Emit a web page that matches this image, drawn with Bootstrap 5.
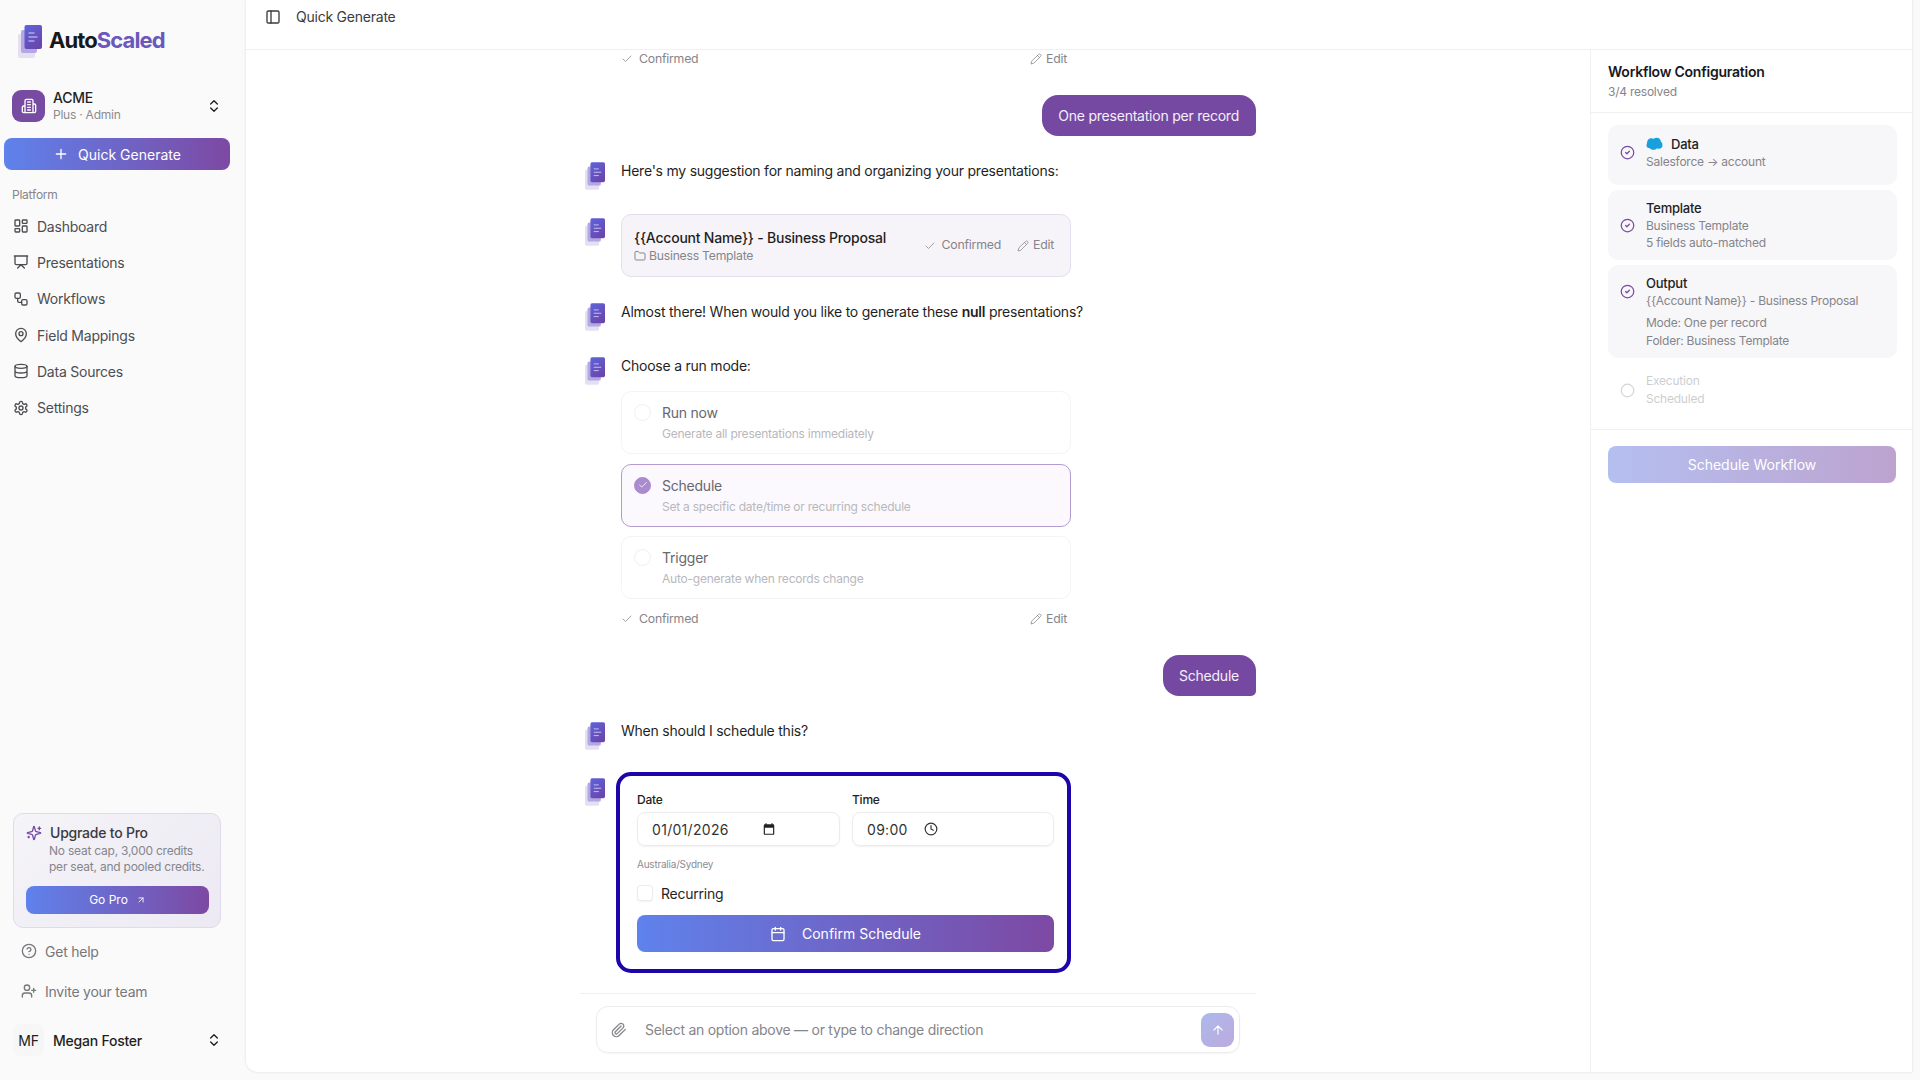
<!DOCTYPE html>
<html lang="en">
<head>
  <meta charset="UTF-8" />
  <title>AutoScaled - Quick Generate</title>
  <link href="https://cdn.jsdelivr.net/npm/bootstrap@5.3.0/dist/css/bootstrap.min.css" rel="stylesheet">
  <style>
    html, body { height: 100%; }
    body { font-family: Inter, "Liberation Sans", sans-serif; background: #fafafa; color: #1f1f23; font-size: 14px; letter-spacing: -0.23px; overflow: hidden; }
    .ico { width: 16px; height: 16px; fill: none; stroke: currentColor; stroke-width: 2; stroke-linecap: round; stroke-linejoin: round; flex: none; }
    .svg-defs { position: absolute; width: 0; height: 0; }

    .side { width: 246px; height: 1080px; flex: none; }
    .brand { height: 74px; padding: 25px 0 0 18px; font-size: 22px; font-weight: 700; letter-spacing: -0.9px; color: #18181b; gap: 7px; }
    .brand b { color: #6a58bd; font-weight: 700; }
    .org { margin: 16px 0 16px; padding: 0 24px 0 12px; height: 32px; }
    .org-ico { width: 33px; height: 32px; border-radius: 9px; background: #784ba3; color: #fff; }
    .org-name { font-size: 14px; font-weight: 500; line-height: 17px; }
    .org-sub { font-size: 12px; line-height: 17px; color: #8b8b90; }
    .grad-btn { background: linear-gradient(90deg, #5f82ec, #7d49a3); color: #fff; border: 0; border-radius: 8px; }
    .grad-btn:hover { color: #fff; }
    .quick { width: 226px; height: 32px; margin-left: 4px; font-size: 14px; gap: 9px; }
    .plat { font-size: 12px; color: #85858a; margin: 17px 0 0 12px; line-height: 16px; }
    .side-nav { margin-top: 5px; }
    .side-nav .nav-link { height: 36.3px; padding: 0 0 0 13px; gap: 8px; color: #4d4d52; font-size: 14px; }
    .promo { margin: 0 25px 0 13px; height: 115px; padding: 9px 12px; border-radius: 10px; border: 1px solid #e0dbec; background: linear-gradient(135deg, #f5f4f8, #ece9f3); }
    .promo-title { font-size: 14px; font-weight: 500; line-height: 20px; color: #3a3a40; }
    .promo-text { font-size: 12px; line-height: 16px; color: #85858c; padding-left: 23px; white-space: nowrap; }
    .go { height: 28px; font-size: 12px; margin-top: 11px; gap: 8px; width: 183px; }
    .foot-link { height: 40px; padding-left: 21px; gap: 8px; color: #77777c; font-size: 14px; }
    .who { height: 32px; margin: 13px 0 24px; padding: 0 24px 0 13px; }
    .who-av { width: 31px; height: 32px; border-radius: 8px; background: #f6f6f6; font-size: 14px; color: #222; }
    .who-name { margin-left: 9px; }

    .shell { width: 1666px; height: 1072px; background: #fff; border-radius: 0 0 0 12px; box-shadow: 0 0 3px rgba(0, 0, 0, .12); }
    .topbar { height: 50px; border-bottom: 1px solid #f0f0f0; padding: 8px 0 0 19px; gap: 15px; color: #3b3b40; font-size: 14px; line-height: 18px; }
    .chat { width: 1344px; }
    .thread { width: 676px; margin: 0 auto; flex: 1; overflow: hidden; padding-left: 5px; }
    .conf-row { width: 450px; height: 18px; margin-left: 36px; font-size: 12.3px; color: #85858a; padding: 0 4px 0 0; }
    .conf-row .ico, .pick-head .ico { width: 12px; height: 12px; stroke-width: 1.5; }
    .conf-gap { gap: 6px; }
    .bubble { background: #7549a2; color: #f4eff9; padding: 0 17px 0 16px; height: 41px; border-radius: 16px 16px 5px 16px; align-self: flex-end; font-size: 14px; }
    .msg { gap: 16px; }
    .msg-logo { width: 20px; height: 28px; flex: none; }
    .logo-text { margin-top: 2px; }
    .logo-card { margin-top: 4px; }
    .logo-form { margin-top: 6px; }
    .msg-text { line-height: 22px; }
    .name-card { width: 450px; height: 63px; border: 1px solid #e4dfee; border-radius: 10px; background: #f6f4f9; padding: 0 16px 0 12px; }
    .name-card b { font-weight: 500; font-size: 14px; line-height: 20px; }
    .name-sub { font-size: 12.2px; color: #85858a; line-height: 16px; gap: 3px; }
    .pick { width: 450px; height: 63px; margin-left: 36px; border: 1px solid #f4f4f5; border-radius: 10px; padding: 11px 12px 0 40px; position: relative; }
    .pick.on { border-color: #b39ad0; background: #fbf9fd; }
    .pick-gap { margin-top: 9.5px; }
    .pick-title { font-size: 14px; font-weight: 400; line-height: 20px; color: #68686d; }
    .pick-sub { font-size: 12px; line-height: 18px; color: #b8b8bc; margin-top: 2px; }
    .radio-dot { position: absolute; left: 12px; top: 12px; width: 17px; height: 17px; border-radius: 50%; border: 1px solid #f0f0f1; color: #fff; }
    .on .radio-dot { background: #a98bce; border-color: #a98bce; }
    .sched-box { width: 455px; height: 201px; margin-left: -5px; border: 4px solid #1c05ab; border-radius: 15px; padding: 16px 12px 0 17px; }
    .fld-label { font-size: 12px; font-weight: 500; line-height: 16px; margin-bottom: 4px; color: #222; }
    .fld-date { flex: 0 0 215px; }
    .fake-input { height: 34px; border-radius: 8px; border: 1px solid #ececee; box-shadow: 0 1px 2px rgba(0, 0, 0, .06); padding: 0 14px; font-size: 14px; letter-spacing: .3px; gap: 16px; color: #333; }
    .cal-ico { margin-left: 17px; }
    .tz { font-size: 10px; color: #8d8d92; margin-top: 12px; line-height: 12px; }
    .recur { margin-top: 10px; height: 26px; gap: 8px; font-size: 14px; }
    .recur .form-check-input { width: 16px; height: 16px; margin: 0; border-color: #ececee; box-shadow: 0 1px 2px rgba(0, 0, 0, .06); }
    .confirm { width: 417px; height: 37px; margin-top: 9px; font-size: 14px; gap: 16px; }
    .composer-wrap { width: 676px; margin: 0 auto; height: 79px; border-top: 1px solid #f0f0f0; padding: 12px 16px 0; }
    .composer { height: 47px; border: 1px solid #ececee; border-radius: 12px; padding: 0 5px 0 14px; gap: 18px; color: #85858a; font-size: 14px; letter-spacing: -0.26px; box-shadow: 0 1px 2px rgba(0, 0, 0, .04); }
    .send { width: 33px; height: 34px; border-radius: 9px; background: linear-gradient(135deg, #adb9ec, #bda9dd); color: #fff; }

    .cfg { width: 322px; border-left: 1px solid #f0f0f0; height: 1022px; }
    .cfg-head { height: 63px; padding: 12px 16px 0 17px; border-bottom: 1px solid #efeff0; }
    .cfg-title { font-size: 14px; font-weight: 600; line-height: 20px; color: #18181b; }
    .cfg-sub { font-size: 12px; color: #85858a; line-height: 18px; margin-top: 1px; }
    .cfg-list { padding: 12px 15px 0 17px; height: 317px; border-bottom: 1px solid #efeff0; gap: 5px; }
    .step { border-radius: 10px; background: #f7f6f9; padding: 0 12px; gap: 11px; }
    .step-check { width: 15px; height: 15px; color: #784ba3; stroke-width: 2; }
    .step-name { font-size: 13px; font-weight: 500; line-height: 18px; color: #222; }
    .step-line { font-size: 12px; line-height: 18px; color: #85858a; white-space: nowrap; }
    .step.off { background: none; opacity: .4; }
    .sched-btn { width: 288px; height: 37px; margin: 16px 0 0 17px; background: linear-gradient(90deg, #b4bff0, #bda3cf); font-size: 14px; }
  </style>
</head>
<body class="d-flex">
  <svg class="svg-defs">
    <defs>
      <linearGradient id="logo-fill" x1="0" y1="0" x2="0.6" y2="1"><stop offset="0" stop-color="#5c66dc"/><stop offset="1" stop-color="#6b45ae"/></linearGradient>
    </defs>
    <symbol id="i-logo" viewBox="0 0 24 33">
      <rect x="0" y="9" width="17" height="24" rx="2" fill="#e4dff3"/>
      <rect x="3" y="5" width="16" height="23" rx="2" fill="#b4a8e2"/>
      <rect x="6.5" y="0" width="17.5" height="24" rx="2" fill="url(#logo-fill)"/>
      <path d="M10.5 8h6M10.5 12h9M10.5 16h6" stroke="#d8d4f5" stroke-width="1" fill="none"/>
    </symbol>
    <symbol id="i-updown" viewBox="0 0 24 24"><path d="m7 15 5 5 5-5M7 9l5-5 5 5"/></symbol>
    <symbol id="i-check" viewBox="0 0 24 24"><path d="M20 6 9 17l-5-5"/></symbol>
    <symbol id="i-pencil" viewBox="0 0 24 24"><path d="M17 3a2.85 2.83 0 1 1 4 4L7.5 20.5 2 22l1.5-5.5ZM15 5l4 4"/></symbol>
    <symbol id="i-cal" viewBox="0 0 24 24"><path d="M8 2v4M16 2v4M3 10h18"/><rect x="3" y="4" width="18" height="18" rx="2"/></symbol>
    <symbol id="i-cc" viewBox="0 0 24 24"><circle cx="12" cy="12" r="10"/><path d="m9 12 2 2 4-4"/></symbol>
  </svg>

  <aside class="side d-flex flex-column">
    <div class="brand d-flex align-items-start">
      <svg width="24" height="33"><use href="#i-logo"/></svg>
      <span class="lh-1 mt-1">Auto<b>Scaled</b></span>
    </div>
    <div class="org d-flex align-items-center">
      <div class="org-ico d-flex align-items-center justify-content-center">
        <svg class="ico" viewBox="0 0 24 24" stroke-width="1.6"><path d="M6 22V4a2 2 0 0 1 2-2h8a2 2 0 0 1 2 2v18ZM6 12H4a2 2 0 0 0-2 2v6a2 2 0 0 0 2 2h2M18 9h2a2 2 0 0 1 2 2v9a2 2 0 0 1-2 2h-2M10 6h4M10 10h4M10 14h4M10 18h4"/></svg>
      </div>
      <div class="ms-2 flex-grow-1">
        <div class="org-name">ACME</div>
        <div class="org-sub">Plus · Admin</div>
      </div>
      <svg class="ico"><use href="#i-updown"/></svg>
    </div>
    <button class="btn grad-btn quick d-flex align-items-center justify-content-center p-0">
      <svg class="ico" viewBox="0 0 24 24"><path d="M5 12h14M12 5v14"/></svg>Quick Generate
    </button>
    <div class="plat">Platform</div>
    <nav class="nav flex-column side-nav">
      <a class="nav-link d-flex align-items-center" href="#"><svg class="ico" viewBox="0 0 24 24"><rect x="3" y="3" width="7" height="9" rx="1"/><rect x="14" y="3" width="7" height="5" rx="1"/><rect x="14" y="12" width="7" height="9" rx="1"/><rect x="3" y="16" width="7" height="5" rx="1"/></svg>Dashboard</a>
      <a class="nav-link d-flex align-items-center" href="#"><svg class="ico" viewBox="0 0 24 24"><path d="M2 3h20M21 3v11a2 2 0 0 1-2 2H5a2 2 0 0 1-2-2V3M7 21l5-5 5 5"/></svg>Presentations</a>
      <a class="nav-link d-flex align-items-center" href="#"><svg class="ico" viewBox="0 0 24 24"><rect x="3" y="3" width="8" height="8" rx="2"/><path d="M7 11v4a2 2 0 0 0 2 2h4"/><rect x="13" y="13" width="8" height="8" rx="2"/></svg>Workflows</a>
      <a class="nav-link d-flex align-items-center" href="#"><svg class="ico" viewBox="0 0 24 24"><path d="M20 10c0 6-8 12-8 12s-8-6-8-12a8 8 0 0 1 16 0Z"/><circle cx="12" cy="10" r="3"/></svg>Field Mappings</a>
      <a class="nav-link d-flex align-items-center" href="#"><svg class="ico" viewBox="0 0 24 24"><ellipse cx="12" cy="5" rx="9" ry="3"/><path d="M3 5v14a9 3 0 0 0 18 0V5M3 12a9 3 0 0 0 18 0"/></svg>Data Sources</a>
      <a class="nav-link d-flex align-items-center" href="#"><svg class="ico" viewBox="0 0 24 24"><path d="M12.22 2h-.44a2 2 0 0 0-2 2v.18a2 2 0 0 1-1 1.73l-.43.25a2 2 0 0 1-2 0l-.15-.08a2 2 0 0 0-2.73.73l-.22.38a2 2 0 0 0 .73 2.73l.15.1a2 2 0 0 1 1 1.72v.51a2 2 0 0 1-1 1.74l-.15.09a2 2 0 0 0-.73 2.73l.22.38a2 2 0 0 0 2.73.73l.15-.08a2 2 0 0 1 2 0l.43.25a2 2 0 0 1 1 1.73V20a2 2 0 0 0 2 2h.44a2 2 0 0 0 2-2v-.18a2 2 0 0 1 1-1.73l.43-.25a2 2 0 0 1 2 0l.15.08a2 2 0 0 0 2.73-.73l.22-.39a2 2 0 0 0-.73-2.73l-.15-.08a2 2 0 0 1-1-1.74v-.5a2 2 0 0 1 1-1.74l.15-.09a2 2 0 0 0 .73-2.73l-.22-.38a2 2 0 0 0-2.73-.73l-.15.08a2 2 0 0 1-2 0l-.43-.25a2 2 0 0 1-1-1.73V4a2 2 0 0 0-2-2z"/><circle cx="12" cy="12" r="3"/></svg>Settings</a>
    </nav>
    <div class="mt-auto">
      <div class="promo">
        <div class="promo-title d-flex align-items-center gap-2">
          <svg class="ico" viewBox="0 0 24 24" style="color:#7549a2"><path d="M9.937 15.5A2 2 0 0 0 8.5 14.063l-6.135-1.582a.5.5 0 0 1 0-.962L8.5 9.936A2 2 0 0 0 9.937 8.5l1.582-6.135a.5.5 0 0 1 .963 0L14.063 8.5A2 2 0 0 0 15.5 9.937l6.135 1.581a.5.5 0 0 1 0 .964L15.5 14.063a2 2 0 0 0-1.437 1.437l-1.582 6.135a.5.5 0 0 1-.963 0zM20 3v4M22 5h-4M4 17v2M5 18H3"/></svg>
          Upgrade to Pro
        </div>
        <div class="promo-text">No seat cap, 3,000 credits<br>per seat, and pooled credits.</div>
        <button class="btn grad-btn go d-flex align-items-center justify-content-center p-0">Go Pro
          <svg class="ico" viewBox="0 0 24 24" style="width:10px;height:10px"><path d="M7 7h10v10M7 17 17 7"/></svg>
        </button>
      </div>
      <div class="foot-link d-flex align-items-center" style="margin-top:3px"><svg class="ico" viewBox="0 0 24 24" stroke-width="1.6"><circle cx="12" cy="12" r="10"/><path d="M9.09 9a3 3 0 0 1 5.83 1c0 2-3 3-3 3M12 17h.01"/></svg>Get help</div>
      <div class="foot-link d-flex align-items-center"><svg class="ico" viewBox="0 0 24 24" stroke-width="1.6"><path d="M16 21v-2a4 4 0 0 0-4-4H6a4 4 0 0 0-4 4v2M19 8v6M22 11h-6"/><circle cx="9" cy="7" r="4"/></svg>Invite your team</div>
      <div class="who d-flex align-items-center">
        <div class="who-av d-flex align-items-center justify-content-center">MF</div>
        <div class="who-name flex-grow-1 fw-medium">Megan Foster</div>
        <svg class="ico"><use href="#i-updown"/></svg>
      </div>
    </div>
  </aside>

  <main class="shell d-flex flex-column">
    <header class="topbar d-flex align-items-start">
      <svg class="ico" viewBox="0 0 24 24" style="margin-top:1px"><rect x="3" y="3" width="18" height="18" rx="2"/><path d="M9 3v18"/></svg>
      <span>Quick Generate</span>
    </header>
    <div class="d-flex flex-grow-1">
      <section class="chat d-flex flex-column">
        <div class="thread d-flex flex-column">
          <div class="conf-row d-flex align-items-center justify-content-between">
            <span class="d-flex align-items-center conf-gap"><svg class="ico"><use href="#i-check"/></svg>Confirmed</span>
            <span class="d-flex align-items-center gap-1"><svg class="ico"><use href="#i-pencil"/></svg>Edit</span>
          </div>
          <div class="bubble d-flex align-items-center" style="margin-top:27px">One presentation per record</div>

          <div class="msg d-flex" style="margin-top:24px">
            <svg class="msg-logo logo-text"><use href="#i-logo"/></svg>
            <div class="msg-text">Here's my suggestion for naming and organizing your presentations:</div>
          </div>
          <div class="msg d-flex" style="margin-top:24px">
            <svg class="msg-logo logo-card"><use href="#i-logo"/></svg>
            <div class="name-card d-flex align-items-center justify-content-between">
              <div>
                <b>{{Account Name}} - Business Proposal</b>
                <div class="name-sub d-flex align-items-center">
                  <svg class="ico" viewBox="0 0 24 24" style="width:12px;height:12px" stroke-width="1.5"><path d="M20 20a2 2 0 0 0 2-2V8a2 2 0 0 0-2-2h-7.9a2 2 0 0 1-1.69-.9L9.6 3.9A2 2 0 0 0 7.93 3H4a2 2 0 0 0-2 2v13a2 2 0 0 0 2 2Z"/></svg>Business Template
                </div>
              </div>
              <div class="d-flex align-items-center gap-3 pick-head" style="font-size:12.3px;color:#85858a">
                <span class="d-flex align-items-center conf-gap"><svg class="ico"><use href="#i-check"/></svg>Confirmed</span>
                <span class="d-flex align-items-center gap-1"><svg class="ico"><use href="#i-pencil"/></svg>Edit</span>
              </div>
            </div>
          </div>
          <div class="msg d-flex" style="margin-top:24px">
            <svg class="msg-logo logo-text"><use href="#i-logo"/></svg>
            <div class="msg-text">Almost there! When would you like to generate these <b class="fw-semibold">null</b> presentations?</div>
          </div>
          <div class="msg d-flex" style="margin-top:24px">
            <svg class="msg-logo logo-text"><use href="#i-logo"/></svg>
            <div class="msg-text">Choose a run mode:</div>
          </div>

          <div class="pick" style="margin-top:6px"><span class="radio-dot"></span><div class="pick-title">Run now</div><div class="pick-sub">Generate all presentations immediately</div></div>
          <div class="pick on pick-gap">
            <span class="radio-dot d-flex align-items-center justify-content-center"><svg class="ico" viewBox="0 0 24 24" style="width:10px;height:10px"><path d="M20 6 9 17l-5-5"/></svg></span>
            <div class="pick-title">Schedule</div><div class="pick-sub">Set a specific date/time or recurring schedule</div>
          </div>
          <div class="pick pick-gap"><span class="radio-dot"></span><div class="pick-title">Trigger</div><div class="pick-sub">Auto-generate when records change</div></div>
          <div class="conf-row d-flex align-items-center justify-content-between" style="margin-top:11px">
            <span class="d-flex align-items-center conf-gap"><svg class="ico"><use href="#i-check"/></svg>Confirmed</span>
            <span class="d-flex align-items-center gap-1"><svg class="ico"><use href="#i-pencil"/></svg>Edit</span>
          </div>
          <div class="bubble d-flex align-items-center" style="margin-top:27px">Schedule</div>
          <div class="msg d-flex" style="margin-top:24px">
            <svg class="msg-logo logo-text"><use href="#i-logo"/></svg>
            <div class="msg-text">When should I schedule this?</div>
          </div>
          <div class="msg d-flex" style="margin-top:22px">
            <svg class="msg-logo logo-form"><use href="#i-logo"/></svg>
            <form class="sched-box">
              <div class="d-flex">
                <div class="fld-date">
                  <div class="fld-label">Date</div>
                  <div class="fake-input d-flex align-items-center" style="width:203px">01/01/2026
                    <svg class="cal-ico" width="14" height="14" viewBox="0 0 24 24"><path fill="#222" d="M19 4h-1V2h-2v2H8V2H6v2H5a2 2 0 0 0-2 2v14a2 2 0 0 0 2 2h14a2 2 0 0 0 2-2V6a2 2 0 0 0-2-2Zm0 16H5V10h14Z"/></svg>
                  </div>
                </div>
                <div>
                  <div class="fld-label">Time</div>
                  <div class="fake-input d-flex align-items-center" style="width:202px">09:00
                    <svg class="ico" viewBox="0 0 24 24" style="width:14px;height:14px"><circle cx="12" cy="12" r="10"/><path d="M12 6v6l4 2"/></svg>
                  </div>
                </div>
              </div>
              <div class="tz">Australia/Sydney</div>
              <div class="recur d-flex align-items-center">
                <input class="form-check-input" type="checkbox" id="recurring">
                <label for="recurring">Recurring</label>
              </div>
              <button type="button" class="btn grad-btn confirm d-flex align-items-center justify-content-center p-0"><svg class="ico"><use href="#i-cal"/></svg>Confirm Schedule</button>
            </form>
          </div>
        </div>
        <div class="composer-wrap">
          <div class="composer d-flex align-items-center">
            <svg class="ico" viewBox="0 0 24 24" stroke-width="1.6"><path d="m21.44 11.05-9.19 9.19a6 6 0 0 1-8.49-8.49l8.57-8.57A4 4 0 1 1 18 8.84l-8.59 8.57a2 2 0 0 1-2.83-2.83l8.49-8.48"/></svg>
            <span class="flex-grow-1">Select an option above — or type to change direction</span>
            <span class="send d-flex align-items-center justify-content-center"><svg class="ico" viewBox="0 0 24 24" style="width:14px;height:14px"><path d="m5 12 7-7 7 7M12 19V5"/></svg></span>
          </div>
        </div>
      </section>

      <section class="cfg">
        <div class="cfg-head">
          <div class="cfg-title">Workflow Configuration</div>
          <div class="cfg-sub">3/4 resolved</div>
        </div>
        <div class="cfg-list d-flex flex-column">
          <div class="step d-flex align-items-center" style="height:60px;padding-bottom:5px">
            <svg class="ico step-check"><use href="#i-cc"/></svg>
            <div>
              <div class="step-name d-flex align-items-center gap-2">
                <svg width="17" height="14" viewBox="0 0 16 12"><g fill="#18a0dc"><circle cx="5" cy="4.5" r="4"/><circle cx="10" cy="4" r="4"/><circle cx="12" cy="7" r="3.5"/><circle cx="7" cy="8" r="3.5"/><circle cx="3.5" cy="7" r="3"/></g></svg>
                Data</div>
              <div class="step-line">Salesforce → account</div>
            </div>
          </div>
          <div class="step d-flex align-items-center" style="height:70px">
            <svg class="ico step-check"><use href="#i-cc"/></svg>
            <div>
              <div class="step-name">Template</div>
              <div class="step-line">Business Template</div>
              <div class="step-line" style="line-height:16px">5 fields auto-matched</div>
            </div>
          </div>
          <div class="step d-flex align-items-start" style="height:93px;padding-top:9px">
            <svg class="ico step-check" style="margin-top:10px"><use href="#i-cc"/></svg>
            <div>
              <div class="step-name">Output</div>
              <div class="step-line">{{Account Name}} - Business Proposal</div>
              <div class="step-line" style="margin-top:4px">Mode: One per record</div>
              <div class="step-line">Folder: Business Template</div>
            </div>
          </div>
          <div class="step off d-flex align-items-center" style="height:54px">
            <svg class="ico step-check" style="color:#999" viewBox="0 0 24 24"><circle cx="12" cy="12" r="10"/></svg>
            <div>
              <div class="step-line">Execution</div>
              <div class="step-line">Scheduled</div>
            </div>
          </div>
        </div>
        <button class="btn grad-btn sched-btn d-block p-0">Schedule Workflow</button>
      </section>
    </div>
  </main>
</body>
</html>
